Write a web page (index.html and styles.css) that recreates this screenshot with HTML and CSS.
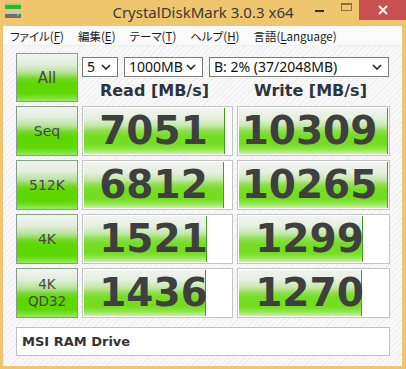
FILE: index.html
```html
<!DOCTYPE html>
<html lang="ja">
<head>
<meta charset="utf-8">
<title>CrystalDiskMark 3.0.3 x64</title>
<link rel="stylesheet" href="styles.css">
</head>
<body>
<div class="window">
  <div class="titlebar">
    <svg class="app-icon" width="16" height="15" viewBox="0 0 16 15">
      <rect x="0" y="0" width="16" height="6" fill="#2fb52f"/>
      <rect x="0" y="0" width="16" height="2" fill="#7ee07e"/>
      <rect x="0" y="8" width="16" height="7" rx="1" fill="#6f6f6f"/>
      <rect x="0" y="8" width="16" height="3" rx="1" fill="#c8c8c8"/>
      <rect x="12" y="11" width="2" height="2" fill="#35d035"/>
    </svg>
    <div class="title">CrystalDiskMark 3.0.3 x64</div>
    <div class="controls">
      <div class="ctl ctl-min"><span class="min-line"></span></div>
      <div class="ctl ctl-max"><span class="max-box"></span></div>
      <div class="ctl ctl-close">
        <svg width="10" height="10" viewBox="0 0 10 10"><path d="M1 1 L9 9 M9 1 L1 9" stroke="#fff" stroke-width="1.8"/></svg>
      </div>
    </div>
  </div>
  <div class="client">
    <div class="menubar">
      <span class="menu-item">ファイル(<u>F</u>)</span>
      <span class="menu-item">編集(<u>E</u>)</span>
      <span class="menu-item">テーマ(<u>T</u>)</span>
      <span class="menu-item">ヘルプ(<u>H</u>)</span>
      <span class="menu-item">言語(<u>L</u>anguage)</span>
    </div>
    <div class="main">
      <div class="grid">
        <div class="btn btn-all">All</div>
        <div class="top-right">
          <div class="combos">
            <div class="combo combo-count"><span>5</span><svg class="chev" width="10" height="6" viewBox="0 0 10 6"><path d="M1 1 L5 5 L9 1" fill="none" stroke="#222" stroke-width="1.6"/></svg></div>
            <div class="combo combo-size"><span>1000MB</span><svg class="chev" width="10" height="6" viewBox="0 0 10 6"><path d="M1 1 L5 5 L9 1" fill="none" stroke="#222" stroke-width="1.6"/></svg></div>
            <div class="combo combo-drive"><span>B: 2% (37/2048MB)</span><svg class="chev" width="10" height="6" viewBox="0 0 10 6"><path d="M1 1 L5 5 L9 1" fill="none" stroke="#222" stroke-width="1.6"/></svg></div>
          </div>
          <div class="headers">
            <div class="hdr">Read [MB/s]</div>
            <div class="hdr">Write [MB/s]</div>
          </div>
        </div>

        <div class="btn">Seq</div>
        <div class="result"><div class="bar" style="width:94.5%"></div><span class="num">7051</span></div>
        <div class="result"><div class="bar" style="width:100%"></div><span class="num">10309</span></div>

        <div class="btn">512K</div>
        <div class="result"><div class="bar" style="width:94%"></div><span class="num">6812</span></div>
        <div class="result"><div class="bar" style="width:100%"></div><span class="num">10265</span></div>

        <div class="btn">4K</div>
        <div class="result"><div class="bar" style="width:82.5%"></div><span class="num">1521</span></div>
        <div class="result"><div class="bar" style="width:82%"></div><span class="num">1299</span></div>

        <div class="btn btn-two">4K<br>QD32</div>
        <div class="result"><div class="bar" style="width:82%"></div><span class="num">1436</span></div>
        <div class="result"><div class="bar" style="width:81.5%"></div><span class="num">1270</span></div>
      </div>
      <div class="comment">MSI RAM Drive</div>
    </div>
  </div>
</div>
</body>
</html>
```
FILE: styles.css
```css
* { box-sizing: border-box; }
html, body { margin: 0; padding: 0; }
body { width: 406px; height: 369px; overflow: hidden; background: #efc56d; }

.window {
  width: 406px;
  height: 369px;
  background: #efc56d;
  display: flex;
  flex-direction: column;
}

.titlebar {
  height: 26px;
  display: grid;
  grid-template-columns: 1fr auto 1fr;
  align-items: start;
}
.app-icon { margin: 3px 0 0 5px; justify-self: start; }
.title {
  font-family: "Noto Sans", sans-serif;
  font-size: 15px;
  line-height: 24px;
  color: #3a3a3a;
  white-space: nowrap;
}
.controls { justify-self: end; display: flex; }
.ctl { height: 20px; display: flex; align-items: center; justify-content: center; }
.ctl-min { width: 28px; }
.ctl-max { width: 26px; }
.ctl-close { width: 47px; background: #c75050; }
.min-line { width: 9px; height: 2px; background: #2e2e2e; margin-top: 2px; }
.max-box { width: 11px; height: 8px; border: 1px solid #8f6f3a; border-top-width: 2px; margin-top: -6px; }

.client {
  flex: 1;
  margin: 0 4px 3px 3px;
  display: flex;
  flex-direction: column;
  background: #f7f7f7;
}

.menubar {
  height: 20px;
  background: #fafafa;
  border-bottom: 1px solid #efefef;
  display: flex;
  align-items: center;
  padding-left: 7px;
  font-family: "Noto Sans CJK JP", sans-serif;
  font-feature-settings: "palt" 1;
  font-size: 11.5px;
  color: #1a1a1a;
}
.menu-item { margin-right: 14px; white-space: nowrap; }
.menu-item u { text-decoration-thickness: 1px; text-underline-offset: 2px; }

.main {
  flex: 1;
  padding: 7px 0 0 13px;
  background: repeating-linear-gradient(135deg, #f8f8f8 0px, #f8f8f8 3px, #eeeeee 3px, #eeeeee 4px);
}

.grid {
  display: grid;
  grid-template-columns: 62px 151px 153px;
  grid-template-rows: 49px 50px 50px 50px 50px;
  column-gap: 4px;
  row-gap: 4px;
}

.btn {
  border: 1px solid #869f86;
  background: linear-gradient(to bottom, #f2f3f1 0%, #e2eedd 22%, #b4e296 40%, #74d826 52%, #5dd700 62%, #5ed800 84%, #7ee23a 94%, #9ce868 100%);
  display: flex;
  align-items: center;
  justify-content: center;
  font-family: "DejaVu Sans", sans-serif;
  font-size: 14px;
  color: #474747;
  text-align: center;
}
.btn-all { font-size: 15px; color: #4a4a4a; }
.btn-two { line-height: 17px; font-size: 13.5px; }

.top-right {
  grid-column: 2 / 4;
  display: flex;
  flex-direction: column;
  justify-content: space-between;
}
.combos { display: flex; margin-top: 4px; }
.combo {
  height: 20px;
  border: 1px solid #7a7a7a;
  background: #fff;
  display: flex;
  align-items: center;
  justify-content: space-between;
  padding: 0 6px 0 4px;
  font-family: "Noto Sans", sans-serif;
  font-size: 14px;
  color: #111;
  line-height: 18px;
  margin-right: 6px;
}
.combo-count { width: 36px; }
.combo-size { width: 79px; }
.combo-drive { width: 180px; margin-right: 0; }
.chev { flex: none; }

.headers {
  display: grid;
  grid-template-columns: 151px 153px;
  column-gap: 4px;
  height: 22px;
}
.hdr {
  font-family: "DejaVu Sans", sans-serif;
  font-weight: bold;
  font-size: 16px;
  line-height: 22px;
  color: #2f333b;
  text-align: center;
  padding-right: 6px;
  white-space: nowrap;
}

.result {
  position: relative;
  border: 1px solid #c4c4c4;
  background: #fff;
  display: flex;
  align-items: center;
  justify-content: center;
  padding-right: 8px;
}
.bar {
  position: absolute;
  left: 1px;
  top: 1px;
  bottom: 1px;
  max-width: calc(100% - 2px);
  background: linear-gradient(to bottom, #f1f3f0 0%, #e6f0e0 22%, #c4e8aa 38%, #8cdf4a 50%, #76dd24 60%, #74dd20 80%, #90e64e 90%, #c8f49e 100%);
  border-right: 1px solid #469a2c;
}
.num {
  position: relative;
  font-family: "DejaVu Sans", sans-serif;
  font-weight: bold;
  font-size: 39px;
  line-height: 44px;
  color: #3f3f3f;
}

.comment {
  margin-top: 9px;
  width: 374px;
  height: 29px;
  border: 1px solid #c2c2c2;
  background: #fff;
  padding-left: 5px;
  display: flex;
  align-items: center;
  font-family: "DejaVu Sans", sans-serif;
  font-weight: bold;
  font-size: 13px;
  color: #333;
}
```
